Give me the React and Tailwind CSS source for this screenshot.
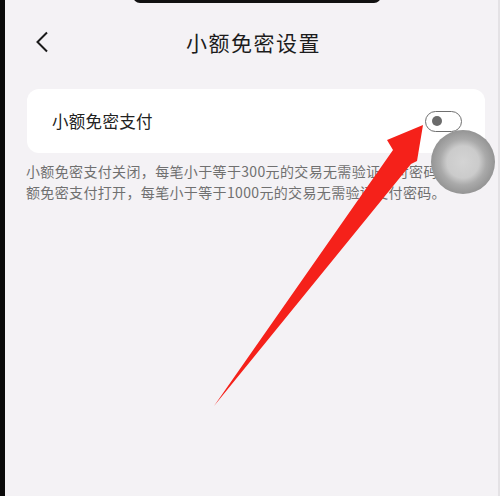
import React from "react";

// Small-amount password-free payment settings screen
const Toggle = () => (
  <div className="w-[37px] h-[21px] rounded-full border-[1.5px] border-[#6f6f6f] bg-white flex items-center pl-[6px]">
    <div className="w-[10px] h-[10px] rounded-full bg-[#6b6b6b]" />
  </div>
);

const Overlay = () => (
  <svg className="absolute inset-0 pointer-events-none" width="500" height="496" viewBox="0 0 500 496">
    <defs>
      <radialGradient id="touch" cx="0.5" cy="0.5" r="0.5">
        <stop offset="0" stopColor="#d4d4d4" />
        <stop offset="0.5" stopColor="#cbcbcb" />
        <stop offset="0.72" stopColor="#aaaaaa" />
        <stop offset="1" stopColor="#949494" />
      </radialGradient>
    </defs>
    <circle cx="463" cy="162" r="32" fill="url(#touch)" />
    <polygon
      points="423,125 417,161 411,164 214,406 393,150 387,140"
      fill="#f5211a"
    />
  </svg>
);

export default function App() {
  return (
    <div
      className="relative w-[500px] h-[496px] flex overflow-hidden bg-[#f4f2f5]"
      style={{ fontFamily: '"Noto Sans CJK SC", "Noto Sans", sans-serif' }}
    >
      <div className="w-[5px] shrink-0 bg-[#0a0a0a]" />
      <div className="relative flex-1 flex flex-col overflow-hidden border-r-[2px] border-[#e4e2e5]">
        {/* notch edge */}
        <div className="absolute top-[-4px] left-[128px] w-[248px] h-[7px] rounded-b-full bg-[#111]" />

        <div className="h-[84px] shrink-0 relative flex items-center justify-center">
          <svg className="absolute left-[30px] top-[31px]" width="14" height="22" viewBox="0 0 14 22">
            <path d="M12 1.5 L2.5 11 L12 20.5" fill="none" stroke="#1a1a1a" strokeWidth="2" />
          </svg>
          <h1 className="text-[21px] text-[#1c1c1c] tracking-[1.5px] mt-[2px] ml-[4px]">小额免密设置</h1>
        </div>

        <div className="ml-[22px] mr-[13px] mt-[5px] h-[64px] rounded-[12px] bg-white flex items-center justify-between pl-[25px] pr-[23px]">
          <span className="text-[16.5px] text-[#222] tracking-[0.3px]">小额免密支付</span>
          <Toggle />
        </div>

        <div className="ml-[21px] mt-[8px] text-[14px] leading-[21px] tracking-[0.35px] text-[#707070] whitespace-nowrap">
          <div>小额免密支付关闭，每笔小于等于300元的交易无需验证支付密码；小</div>
          <div>额免密支付打开，每笔小于等于1000元的交易无需验证支付密码。</div>
        </div>
      </div>
      <Overlay />
    </div>
  );
}
